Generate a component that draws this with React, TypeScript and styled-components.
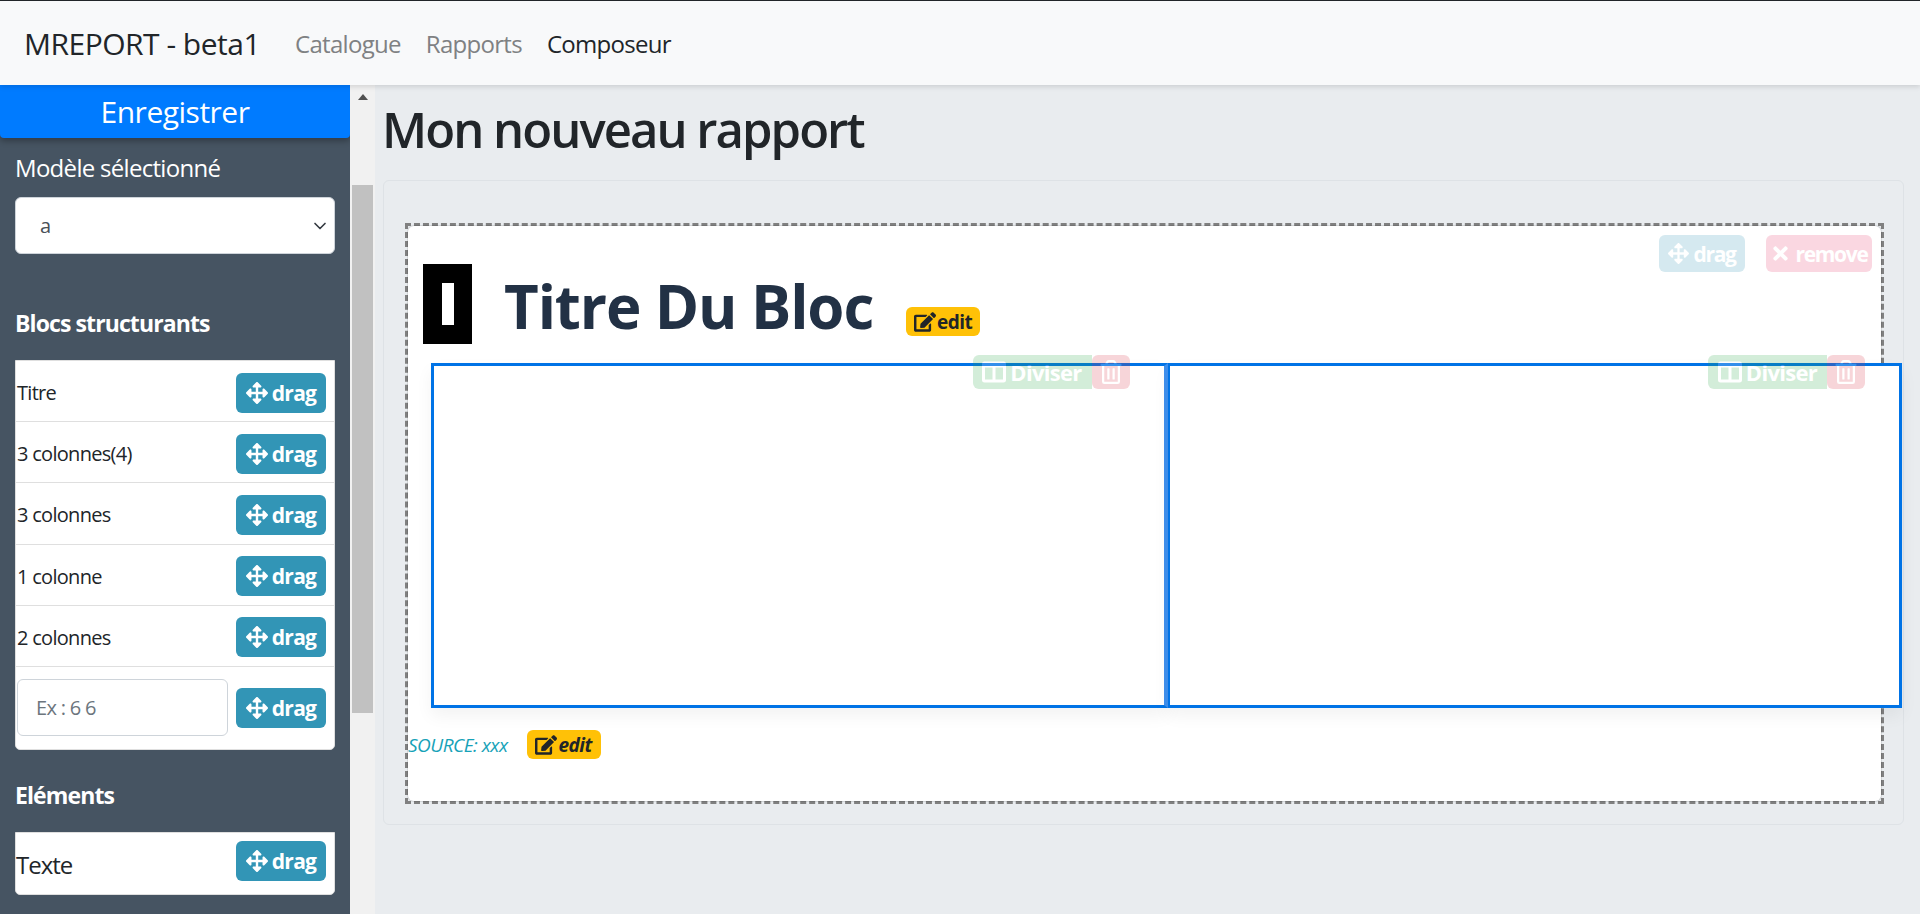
import React from 'react';
import styled, { createGlobalStyle } from 'styled-components';
import { FaArrowsAlt, FaColumns, FaEdit, FaRegTrashAlt, FaTimes } from 'react-icons/fa';
import { LuChevronDown } from 'react-icons/lu';

const structureBlocks = ['Titre', '3 colonnes(4)', '3 colonnes', '1 colonne', '2 colonnes'];

const App = () => {
  return (
    <Page>
      <GlobalStyle />
      <Navbar>
        <Brand>MREPORT - beta1</Brand>
        <NavLink>Catalogue</NavLink>
        <NavLink>Rapports</NavLink>
        <NavLink $active>Composeur</NavLink>
      </Navbar>
      <Body>
        <Sidebar>
          <SaveButton>Enregistrer</SaveButton>
          <SidebarContent>
            <ModelLabel>Modèle sélectionné</ModelLabel>
            <SelectWrap>
              <ModelSelect defaultValue="a">
                <option value="a">a</option>
              </ModelSelect>
              <SelectChevron />
            </SelectWrap>
            <SectionTitle $top={54}>Blocs structurants</SectionTitle>
            <BlockList>
              {structureBlocks.map((label) => (
                <BlockRow key={label}>
                  <span>{label}</span>
                  <DragButton />
                </BlockRow>
              ))}
              <InputRow>
                <ColumnsInput placeholder="Ex : 6 6" />
                <DragButton />
              </InputRow>
            </BlockList>
            <SectionTitle $top={30}>Eléments</SectionTitle>
            <ElementList>
              <ElementLabel>Texte</ElementLabel>
              <DragButton />
            </ElementList>
          </SidebarContent>
        </Sidebar>
        <ScrollTrack>
          <ScrollArrow />
          <ScrollThumb />
        </ScrollTrack>
        <Main>
          <PageTitle>Mon nouveau rapport</PageTitle>
          <Card>
            <DashedFrame>
              <Bloc>
                <BlocActions>
                  <FadedButton $color="#3295b6" $width={86}>
                    <FaArrowsAlt />
                    drag
                  </FadedButton>
                  <FadedButton $color="#e83e6c" $width={106}>
                    <FaTimes />
                    remove
                  </FadedButton>
                </BlocActions>
                <TitleRow>
                  <TitleIcon>
                    <TitleIconBar />
                  </TitleIcon>
                  <BlocTitle>Titre Du Bloc</BlocTitle>
                  <TitleEdit>
                    <FaEdit />
                    edit
                  </TitleEdit>
                </TitleRow>
                <Columns>
                  <Column />
                  <Column />
                </Columns>
                <SourceRow>
                  <SourceText>SOURCE: xxx</SourceText>
                  <EditBadge $italic>
                    <FaEdit />
                    edit
                  </EditBadge>
                </SourceRow>
              </Bloc>
            </DashedFrame>
          </Card>
        </Main>
      </Body>
    </Page>
  );
};

const DragButton = () => (
  <DragBtn>
    <FaArrowsAlt />
    drag
  </DragBtn>
);

const Column = () => (
  <ColumnBox>
    <ColumnActions>
      <FadedButton $color="#28a745" $width={119} $radius="6px 0 0 6px">
        <FaColumns />
        Diviser
      </FadedButton>
      <FadedButton $color="#dc3545" $width={38}>
        <FaRegTrashAlt />
      </FadedButton>
    </ColumnActions>
  </ColumnBox>
);

export default App;

const GlobalStyle = createGlobalStyle`
  html, body {
    margin: 0;
    padding: 0;
    height: 100%;
    overflow: hidden;
  }
  body {
    font-family: "Open Sans", "Noto Sans", sans-serif;
    font-size: 20px;
    color: #212529;
  }
  * {
    box-sizing: border-box;
  }
`;

const Page = styled.div`
  width: 1920px;
  height: 914px;
  display: flex;
  flex-direction: column;
  overflow: hidden;
`;

const Navbar = styled.nav`
  height: 85px;
  flex: none;
  display: flex;
  align-items: center;
  padding-left: 24px;
  background: #f8f9fa;
  border-top: 1px solid #212529;
  box-shadow: 0 2px 5px rgba(0, 0, 0, 0.12);
  position: relative;
  z-index: 3;
`;

const Brand = styled.div`
  width: 271px;
  font-size: 30px;
  letter-spacing: -0.5px;
  color: #212529;
`;

const NavLink = styled.a<{ $active?: boolean }>`
  font-size: 24px;
  letter-spacing: -0.7px;
  margin-right: 25px;
  color: ${(p) => (p.$active ? '#212529' : '#7f8183')};
`;

const Body = styled.div`
  flex: 1;
  display: flex;
  min-height: 0;
`;

const Sidebar = styled.aside`
  width: 350px;
  flex: none;
  background: #465462;
  color: #fff;
`;

const SaveButton = styled.div`
  height: 53px;
  display: flex;
  align-items: center;
  justify-content: center;
  background: #007bff;
  color: #fff;
  font-size: 30px;
  letter-spacing: -0.5px;
  border-radius: 0 0 4px 4px;
  box-shadow: 0 3px 6px rgba(0, 0, 0, 0.3);
`;

const SidebarContent = styled.div`
  padding: 15px 15px 0;
`;

const ModelLabel = styled.div`
  font-size: 24px;
  line-height: 30px;
  letter-spacing: -0.7px;
  margin-bottom: 14px;
`;

const SelectWrap = styled.div`
  position: relative;
  height: 57px;
`;

const ModelSelect = styled.select`
  width: 100%;
  height: 100%;
  padding-left: 24px;
  appearance: none;
  background: #fff;
  border: 1px solid #ced4da;
  border-radius: 6px;
  font-family: inherit;
  font-size: 20px;
  color: #495057;
`;

const SelectChevron = styled(LuChevronDown)`
  position: absolute;
  right: 5px;
  top: 19px;
  width: 20px;
  height: 20px;
  color: #343a40;
`;

const SectionTitle = styled.div<{ $top: number }>`
  margin-top: ${(p) => p.$top}px;
  font-size: 23px;
  font-weight: 700;
  line-height: 30px;
  letter-spacing: -0.9px;
  margin-bottom: 22px;
`;

const BlockList = styled.div`
  background: #fff;
  color: #212529;
  border: 1px solid #dfdfdf;
  border-radius: 0 0 5px 5px;
`;

const BlockRow = styled.div`
  height: 61.2px;
  display: flex;
  align-items: center;
  justify-content: space-between;
  padding: 3px 8px 0 1px;
  font-size: 20px;
  letter-spacing: -0.7px;
  border-bottom: 1px solid #dfdfdf;
`;

const InputRow = styled.div`
  height: 82px;
  display: flex;
  align-items: center;
  justify-content: space-between;
  padding: 0 8px 0 1px;
`;

const ColumnsInput = styled.input`
  width: 211px;
  height: 57px;
  padding-left: 18px;
  border: 1px solid #ced4da;
  border-radius: 6px;
  font-family: inherit;
  font-size: 20px;
  letter-spacing: -0.7px;
  color: #495057;
  &::placeholder {
    color: #6c757d;
    opacity: 1;
  }
`;

const ElementList = styled.div`
  height: 63px;
  display: flex;
  align-items: center;
  justify-content: space-between;
  padding: 0 8px 4px 0;
  background: #fff;
  color: #212529;
  border: 1px solid #dfdfdf;
  border-radius: 0 0 5px 5px;
`;

const ElementLabel = styled.span`
  font-size: 24px;
  letter-spacing: -1px;
  padding-top: 7px;
`;

const DragBtn = styled.div`
  width: 90px;
  height: 40px;
  flex: none;
  display: flex;
  align-items: center;
  justify-content: center;
  gap: 4px;
  background: #3295b6;
  color: #fff;
  font-size: 21px;
  font-weight: 700;
  letter-spacing: -0.7px;
  border-radius: 6px;
  svg {
    width: 22px;
    height: 22px;
  }
`;

const ScrollTrack = styled.div`
  width: 25px;
  flex: none;
  padding: 0 2px;
  background: #f1f1f1;
  position: relative;
  z-index: 1;
`;

const ScrollArrow = styled.div`
  width: 0;
  height: 0;
  margin: 9px auto 0;
  border-left: 5px solid transparent;
  border-right: 5px solid transparent;
  border-bottom: 6px solid #505050;
`;

const ScrollThumb = styled.div`
  margin-top: 85px;
  height: 528px;
  background: #c1c1c1;
`;

const Main = styled.main`
  flex: 1;
  min-width: 0;
  padding: 0 16px 0 8px;
  background: #e9ecef;
`;

const PageTitle = styled.h1`
  margin: 17px 0 23px -1px;
  font-size: 49px;
  font-weight: 600;
  line-height: 55px;
  letter-spacing: -1.95px;
  color: #212529;
`;

const Card = styled.section`
  height: 645px;
  padding: 42px 19px 20px 21px;
  border: 1px solid #dee2e6;
  border-radius: 6px;
`;

const DashedFrame = styled.div`
  height: 581px;
  border: 3px dashed #808080;
`;

const Bloc = styled.div`
  height: 100%;
  position: relative;
  padding: 38px 0 0;
  background: #fff;
  border-radius: 6px;
  box-shadow: 0 0 0 1px rgba(0, 0, 0, 0.1);
`;

const BlocActions = styled.div`
  position: absolute;
  top: 9px;
  right: 9px;
  display: flex;
  gap: 21px;
`;

const FadedButton = styled.div<{ $color: string; $width: number; $radius?: string }>`
  width: ${(p) => p.$width}px;
  height: 37px;
  display: flex;
  align-items: center;
  justify-content: center;
  gap: 4px;
  background: ${(p) => p.$color};
  color: #fff;
  font-size: 21px;
  font-weight: 700;
  letter-spacing: -1.3px;
  border-radius: ${(p) => p.$radius ?? '6px'};
  opacity: 0.2;
  svg {
    width: 21px;
    height: 21px;
  }
`;

const TitleRow = styled.div`
  height: 80px;
  display: flex;
  align-items: center;
  padding-left: 15px;
`;

const TitleIcon = styled.div`
  width: 49px;
  height: 80px;
  flex: none;
  display: flex;
  align-items: center;
  justify-content: center;
  background: #000;
  margin-right: 32px;
`;

const TitleIconBar = styled.div`
  width: 12px;
  height: 42px;
  background: #fff;
`;

const BlocTitle = styled.h2`
  margin: 0 33px 0 0;
  padding-top: 4px;
  font-size: 60px;
  font-weight: 700;
  line-height: 72px;
  letter-spacing: -1.1px;
  color: #223145;
`;

const EditBadge = styled.span<{ $italic?: boolean }>`
  width: 74px;
  height: 29px;
  display: inline-flex;
  align-items: center;
  justify-content: center;
  gap: 1px;
  background: #ffc107;
  color: #212529;
  border-radius: 6px;
  font-size: 19px;
  font-weight: 700;
  letter-spacing: -0.5px;
  font-style: ${(p) => (p.$italic ? 'italic' : 'normal')};
  svg {
    width: 22px;
    height: 20px;
  }
`;

const TitleEdit = styled(EditBadge)`
  align-self: flex-end;
  margin-bottom: 8px;
`;

const Columns = styled.div`
  width: 1471px;
  height: 345px;
  margin: 19px 0 0 23px;
  display: flex;
`;

const ColumnBox = styled.div`
  flex: 1;
  position: relative;
  background: #fff;
  border: 3px solid #0073e6;
  box-shadow: 0 8px 16px rgba(0, 0, 0, 0.05);
  &:first-child {
    border-right: 4px solid #3f90ee;
  }
  &:last-child {
    border-left-width: 2px;
  }
`;

const ColumnActions = styled.div`
  position: absolute;
  top: -11px;
  right: 34px;
  display: flex;
  ${FadedButton} {
    height: 34px;
    font-size: 22px;
    letter-spacing: -0.7px;
    svg {
      width: 24px;
      height: 24px;
    }
  }
`;

const SourceRow = styled.div`
  margin-top: 22px;
  display: flex;
  align-items: center;
  gap: 19px;
`;

const SourceText = styled.span`
  font-size: 19px;
  font-style: italic;
  letter-spacing: -0.5px;
  color: #17a2b8;
`;
